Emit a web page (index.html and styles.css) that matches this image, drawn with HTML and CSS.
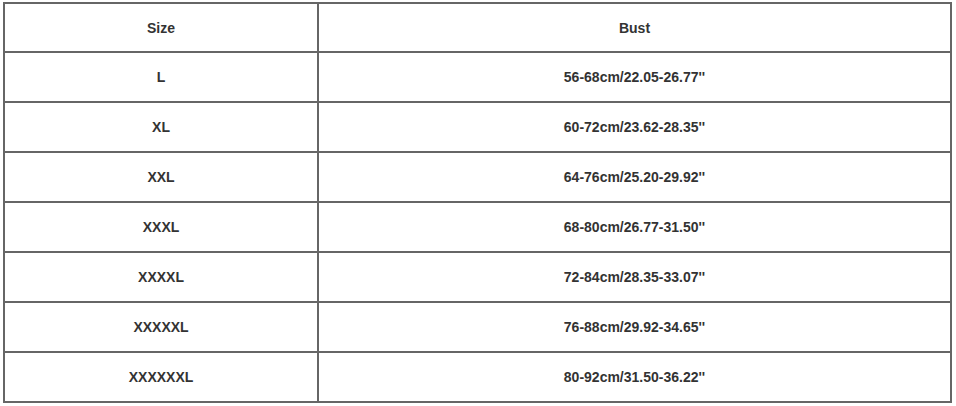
FILE: index.html
```html
<!DOCTYPE html>
<html>
<head>
<meta charset="utf-8">
<link rel="stylesheet" href="styles.css">
</head>
<body>
<table class="size-table">
  <thead>
    <tr><th class="col-size">Size</th><th>Bust</th></tr>
  </thead>
  <tbody>
    <tr><td>L</td><td>56-68cm/22.05-26.77''</td></tr>
    <tr><td>XL</td><td>60-72cm/23.62-28.35''</td></tr>
    <tr><td>XXL</td><td>64-76cm/25.20-29.92''</td></tr>
    <tr><td>XXXL</td><td>68-80cm/26.77-31.50''</td></tr>
    <tr><td>XXXXL</td><td>72-84cm/28.35-33.07''</td></tr>
    <tr><td>XXXXXL</td><td>76-88cm/29.92-34.65''</td></tr>
    <tr><td>XXXXXXL</td><td>80-92cm/31.50-36.22''</td></tr>
  </tbody>
</table>
</body>
</html>
```
FILE: styles.css
```css
html, body {
  margin: 0;
  padding: 0;
  background: #ffffff;
}
body {
  padding: 2px 0 0 3px;
  font-family: "Liberation Sans", Arial, sans-serif;
}
.size-table {
  border-collapse: collapse;
  width: 949px;
  table-layout: fixed;
  border: 2px solid #666;
}
.size-table th,
.size-table td {
  border: 2px solid #666;
  text-align: center;
  vertical-align: middle;
  font-size: 14px;
  font-weight: bold;
  color: #333;
  padding: 0;
  box-sizing: border-box;
}
.size-table th {
  height: 49px;
}
.size-table td {
  height: 50px;
}
.size-table th.col-size {
  width: 314px;
}
```
